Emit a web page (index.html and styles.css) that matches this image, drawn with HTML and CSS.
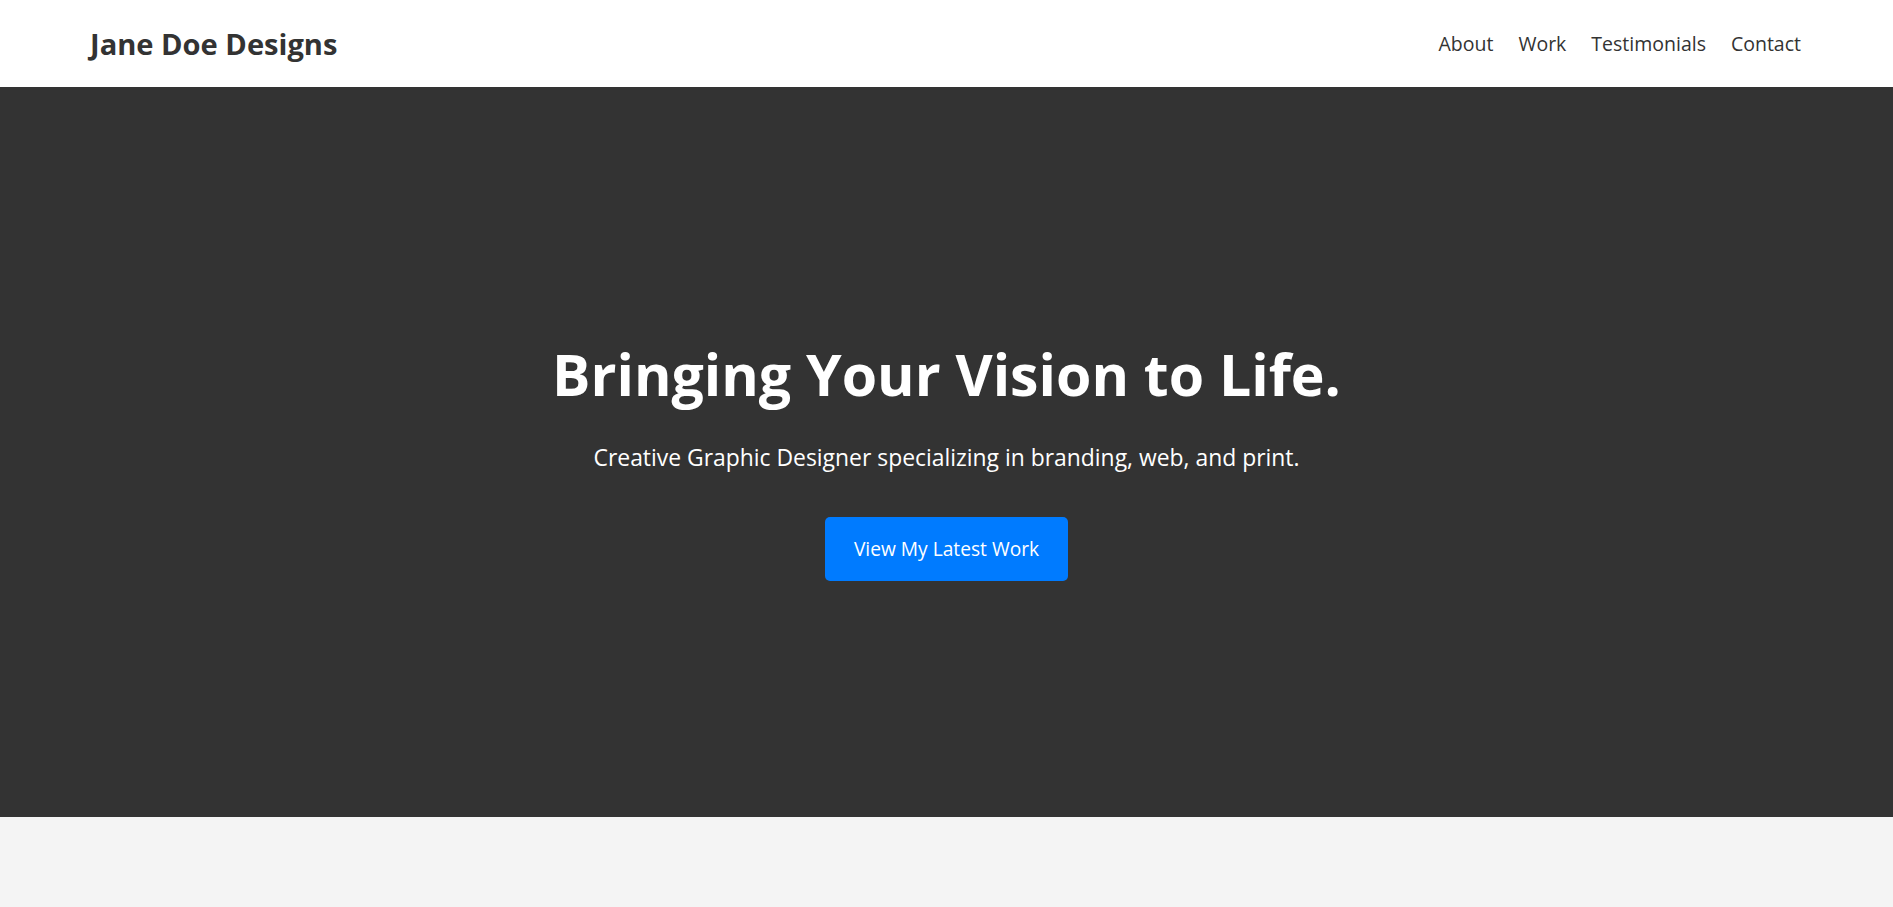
FILE: index.html
```html
<!DOCTYPE html>
<html lang="en">
<head>
<meta charset="utf-8">
<title>Jane Doe Designs</title>
<link rel="stylesheet" href="styles.css">
</head>
<body>
<header class="site-header">
  <div class="logo">Jane Doe Designs</div>
  <nav class="nav">
    <a href="#about">About</a>
    <a href="#work">Work</a>
    <a href="#testimonials">Testimonials</a>
    <a href="#contact">Contact</a>
  </nav>
</header>
<section class="hero">
  <h1 class="hero-title">Bringing Your Vision to Life.</h1>
  <p class="hero-sub">Creative Graphic Designer specializing in branding, web, and print.</p>
  <a class="hero-btn" href="#work">View My Latest Work</a>
</section>
<section class="below"></section>
</body>
</html>
```
FILE: styles.css
```css
* { box-sizing: border-box; }
html, body { margin: 0; padding: 0; }
body {
  font-family: "Open Sans", "Noto Sans", sans-serif;
  color: #333;
  background: #f4f4f4;
}
.site-header {
  height: 87px;
  background: #fff;
  display: flex;
  align-items: center;
  justify-content: space-between;
  padding: 0 92px 0 90px;
}
.logo {
  font-size: 29.1px;
  font-weight: 700;
  color: #333;
}
.nav {
  display: flex;
  gap: 25px;
}
.nav a {
  font-size: 19.5px;
  font-weight: 500;
  color: #333;
  text-decoration: none;
}
.hero {
  height: 730px;
  background: #333;
  color: #fff;
  display: flex;
  flex-direction: column;
  align-items: center;
  justify-content: center;
  text-align: center;
  padding-top: 17px;
}
.hero-title {
  margin: 0;
  font-size: 57.2px;
  font-weight: 700;
  line-height: 1.2;
}
.hero-sub {
  margin: 34px 0 43px;
  font-size: 22.9px;
  line-height: 1.4;
}
.hero-btn {
  display: inline-block;
  background: #007bff;
  color: #fff;
  text-decoration: none;
  font-size: 19.2px;
  line-height: 24px;
  padding: 20px 29px;
  border-radius: 5px;
}
.below {
  height: 90px;
  background: #f4f4f4;
}
```
